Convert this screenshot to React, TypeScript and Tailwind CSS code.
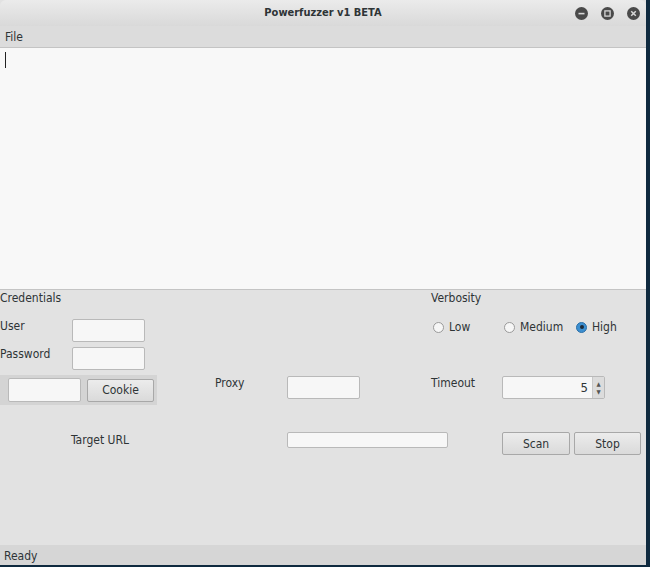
import React from "react";

const font = { fontFamily: '"DejaVu Sans Condensed", "DejaVu Sans", sans-serif' };

function Field({ className = "" }: { className?: string }) {
  return <div className={`bg-[#f7f7f7] border border-[#b9b9b9] rounded-[2px] ${className}`} />;
}

function Button({ label, className = "" }: { label: string; className?: string }) {
  return (
    <div
      className={`flex items-center justify-center bg-gradient-to-b from-[#ececec] to-[#dadada] border border-[#a8a8a8] rounded-[2px] text-[12px] text-[#2e3436] ${className}`}
    >
      {label}
    </div>
  );
}

function Radio({ label, checked = false }: { label: string; checked?: boolean }) {
  return (
    <div className="flex items-center gap-[5px]">
      {checked ? (
        <div className="w-[11px] h-[11px] rounded-full bg-[#3c8fd0] border border-[#2a6fa8] flex items-center justify-center">
          <div className="w-[4px] h-[4px] rounded-full bg-[#1c2a38]" />
        </div>
      ) : (
        <div className="w-[11px] h-[11px] rounded-full bg-[#f6f6f6] border border-[#9a9a9a]" />
      )}
      <span>{label}</span>
    </div>
  );
}

function WinButton({ kind }: { kind: "min" | "max" | "close" }) {
  return (
    <svg width="13" height="13" viewBox="0 0 13 13">
      <circle cx="6.5" cy="6.5" r="6.5" fill="#4a4a4a" />
      {kind === "min" && <rect x="3.5" y="5.8" width="6" height="1.6" fill="#d8d8d8" />}
      {kind === "max" && <rect x="3.9" y="3.9" width="5.2" height="5.2" fill="none" stroke="#d8d8d8" strokeWidth="1.3" />}
      {kind === "close" && (
        <path d="M4.2 4.2 L8.8 8.8 M8.8 4.2 L4.2 8.8" stroke="#d8d8d8" strokeWidth="1.5" />
      )}
    </svg>
  );
}

export default function App() {
  return (
    <div className="w-[650px] h-[567px] bg-[#0f2a3f] flex flex-col overflow-hidden" style={font}>
      <div className="w-[646px] h-[565px] flex flex-col bg-[#e2e2e2] text-[12px] text-[#2e3436]">
        {/* title bar */}
        <div className="h-[26px] shrink-0 relative flex items-center justify-center bg-gradient-to-b from-[#ebebeb] to-[#d9d9d9] rounded-t-[6px]">
          <span className="font-bold text-[11px] text-[#2e3436]">Powerfuzzer v1 BETA</span>
          <div className="absolute right-[6px] top-[7px] flex gap-[13px]">
            <WinButton kind="min" />
            <WinButton kind="max" />
            <WinButton kind="close" />
          </div>
        </div>
        {/* menu */}
        <div className="h-[21px] shrink-0 flex items-center pl-[5px] bg-[#dcdcdc]">File</div>
        {/* text area */}
        <div className="h-[243px] shrink-0 bg-[#f8f8f8] border-t border-b border-[#c4c4c4] pl-[5px] pt-[4px]">
          <div className="w-[1px] h-[16px] bg-[#222]" />
        </div>
        {/* form */}
        <div className="flex-1 flex flex-col">
          <div className="h-[16px] flex items-center">
            <div className="w-[431px]">Credentials</div>
            <div>Verbosity</div>
          </div>
          <div className="h-[23px] flex items-center mt-[13px]">
            <div className="w-[72px] -mt-[9px]">User</div>
            <Field className="w-[73px] h-[23px]" />
            <div className="w-[288px]" />
            <div className="flex -mt-[7px]">
              <div className="w-[71px]"><Radio label="Low" /></div>
              <div className="w-[72px]"><Radio label="Medium" /></div>
              <Radio label="High" checked />
            </div>
          </div>
          <div className="h-[23px] flex items-center mt-[5px]">
            <div className="w-[72px] -mt-[9px]">Password</div>
            <Field className="w-[73px] h-[23px]" />
          </div>
          <div className="h-[30px] flex items-center mt-[5px]">
            <div className="w-[157px] h-[30px] bg-[#d4d4d4] flex items-center pl-[8px] gap-[6px]">
              <Field className="w-[73px] h-[24px]" />
              <Button label="Cookie" className="w-[67px] h-[23px]" />
            </div>
            <div className="w-[58px]" />
            <div className="w-[72px] -mt-[14px]">Proxy</div>
            <Field className="w-[73px] h-[23px] -mt-[5px]" />
            <div className="w-[71px]" />
            <div className="w-[71px] -mt-[14px]">Timeout</div>
            <div className="w-[103px] h-[23px] -mt-[5px] flex bg-[#f7f7f7] border border-[#b9b9b9] rounded-[2px]">
              <div className="flex-1 flex items-center justify-end pr-[4px] text-[13px]">5</div>
              <div className="w-[12px] bg-[#dcdcdc] border-l border-[#c8c8c8] flex flex-col items-center justify-center text-[6px] leading-[8px] text-[#555]">
                <span>▲</span>
                <span>▼</span>
              </div>
            </div>
          </div>
          <div className="h-[23px] flex items-start mt-[27px]">
            <div className="w-[71px]" />
            <div className="w-[216px] -mt-[1px]">Target URL</div>
            <Field className="w-[161px] h-[16px]" />
            <div className="w-[54px]" />
            <Button label="Scan" className="w-[68px] h-[23px]" />
            <div className="w-[4px]" />
            <Button label="Stop" className="w-[67px] h-[23px]" />
          </div>
        </div>
        {/* status bar */}
        <div className="h-[20px] shrink-0 flex items-center pl-[4px] pt-[1px] bg-[#d6d6d6]">Ready</div>
      </div>
    </div>
  );
}
